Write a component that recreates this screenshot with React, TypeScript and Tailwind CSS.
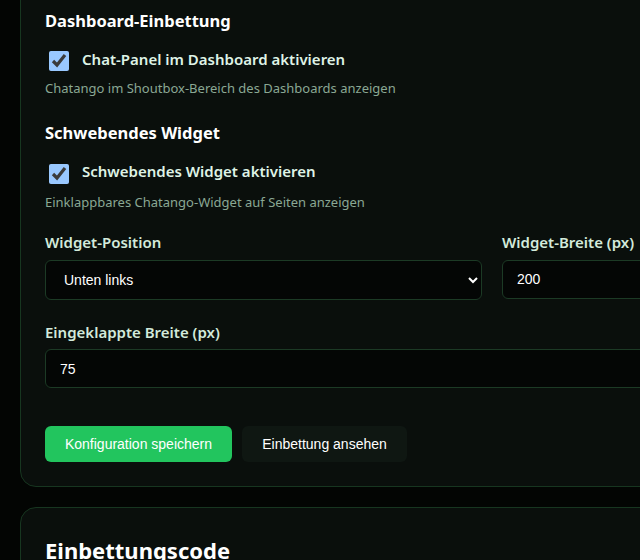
import React, { useState } from 'react';

const sans = "font-['Segoe_UI','Noto_Sans','Open_Sans',sans-serif]";
const control = "font-['Liberation_Sans',Arial,sans-serif]";

const App: React.FC = () => {
  const [dashboardChat, setDashboardChat] = useState(true);
  const [floating, setFloating] = useState(true);
  const [position, setPosition] = useState('bottom-left');
  const [width, setWidth] = useState('200');
  const [collapsed, setCollapsed] = useState('75');

  return (
    <div className={`h-[560px] w-[640px] overflow-hidden bg-[#030503] [color-scheme:dark] ${sans}`}>
      <div className="pl-5">
        {/* Chatango settings card */}
        <section className="-mt-[38px] w-[944px] rounded-2xl border border-[#173620] bg-[#0a0f0c] px-6 pt-[38px] pb-6">
          <h3 className="text-[16.5px] font-bold leading-[40px] text-white">Dashboard-Einbettung</h3>
          <label className="mt-[10px] flex h-5 items-center gap-[13px] pl-1">
            <input
              type="checkbox"
              checked={dashboardChat}
              onChange={e => setDashboardChat(e.target.checked)}
              className="h-5 w-5 m-0"
            />
            <span className="-mt-[4px] text-[15px] font-semibold text-[#dff3e6]">Chat-Panel im Dashboard aktivieren</span>
          </label>
          <p className="mt-2 text-[13px] text-[#8aa894]">Chatango im Shoutbox-Bereich des Dashboards anzeigen</p>

          <h3 className="mt-[14px] text-[16.5px] font-bold leading-[40px] text-white">Schwebendes Widget</h3>
          <label className="mt-[11px] flex h-5 items-center gap-[13px] pl-1">
            <input
              type="checkbox"
              checked={floating}
              onChange={e => setFloating(e.target.checked)}
              className="h-5 w-5 m-0"
            />
            <span className="-mt-[4px] text-[15px] font-semibold text-[#dff3e6]">Schwebendes Widget aktivieren</span>
          </label>
          <p className="mt-[9px] text-[13px] text-[#8aa894]">Einklappbares Chatango-Widget auf Seiten anzeigen</p>

          <div className="mt-[19px] grid grid-cols-2 gap-5">
            <div>
              <div className="mb-[6px] text-[15px] font-semibold text-[#d3eadb]">Widget-Position</div>
              <select
                value={position}
                onChange={e => setPosition(e.target.value)}
                className={`h-10 w-full rounded-md border border-[#1c3a25] bg-[#040605] px-[14px] text-[14px] text-white ${control}`}
              >
                <option value="bottom-left">Unten links</option>
                <option value="bottom-right">Unten rechts</option>
              </select>
            </div>
            <div>
              <div className="mb-[6px] text-[15px] font-semibold text-[#d3eadb]">Widget-Breite (px)</div>
              <input
                value={width}
                onChange={e => setWidth(e.target.value)}
                className={`h-[39px] w-full rounded-md border border-[#1c3a25] bg-[#040605] px-[14px] text-[14px] text-white outline-none ${control}`}
              />
            </div>
          </div>

          <div className="mt-[21px]">
            <div className="mb-[6px] text-[15px] font-semibold text-[#d3eadb]">Eingeklappte Breite (px)</div>
            <input
              value={collapsed}
              onChange={e => setCollapsed(e.target.value)}
              className={`h-[39px] w-full rounded-md border border-[#1c3a25] bg-[#040605] px-[14px] text-[14px] text-white outline-none ${control}`}
            />
          </div>

          <div className={`mt-[38px] flex gap-[10px] ${control}`}>
            <button className="h-9 w-[187px] rounded-md bg-[#22c55e] text-[14px] text-white">Konfiguration speichern</button>
            <button className="h-9 w-[165px] rounded-md bg-[#0f1712] text-[14px] text-white">Einbettung ansehen</button>
          </div>
        </section>

        {/* Embed code card */}
        <section className="mt-5 w-[944px] rounded-2xl border border-[#173620] bg-[#0a0f0c] px-6 pt-[26px] pb-6">
          <h2 className="text-[22px] font-bold leading-8 text-white">Einbettungscode</h2>
        </section>
      </div>
    </div>
  );
};

export default App;
